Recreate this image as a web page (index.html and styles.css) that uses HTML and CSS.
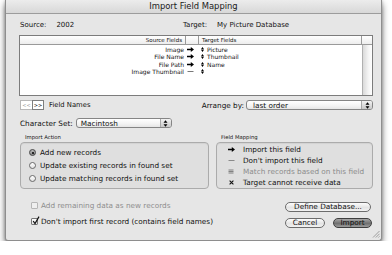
FILE: index.html
```html
<!DOCTYPE html>
<html lang="en">
<head>
  <meta charset="UTF-8" />
  <title>Import Field Mapping</title>
  <link rel="stylesheet" href="styles.css">
</head>
<body>
  <div class="window">
    <div class="titlebar">Import Field Mapping</div>
    <div class="content">
      <div class="info-row">
        <div class="info source"><span class="info-label">Source:</span>2002</div>
        <div class="info"><span class="info-label">Target:</span>My Picture Database</div>
      </div>

      <div class="table">
        <div class="thead">
          <div class="th src">Source Fields</div>
          <div class="th mid"></div>
          <div class="th tgt">Target Fields</div>
          <div class="th corner"></div>
        </div>
        <div class="tbody">
          <div class="rows">
            <div class="row">
              <span class="src">Image</span>
              <span class="mid"><svg class="ic" width="7" height="5" viewBox="0 0 7 5"><path d="M0 1.7H3.8V0L7 2.5 3.8 5V3.3H0Z"/></svg></span>
              <span class="tgt"><svg class="handle" width="3" height="5" viewBox="0 0 3 5"><path d="M1.5 0L3 2.2H0ZM0 2.8H3L1.5 5Z"/></svg>Picture</span>
            </div>
            <div class="row">
              <span class="src">File Name</span>
              <span class="mid"><svg class="ic" width="7" height="5" viewBox="0 0 7 5"><path d="M0 1.7H3.8V0L7 2.5 3.8 5V3.3H0Z"/></svg></span>
              <span class="tgt"><svg class="handle" width="3" height="5" viewBox="0 0 3 5"><path d="M1.5 0L3 2.2H0ZM0 2.8H3L1.5 5Z"/></svg>Thumbnail</span>
            </div>
            <div class="row">
              <span class="src">File Path</span>
              <span class="mid"><svg class="ic" width="7" height="5" viewBox="0 0 7 5"><path d="M0 1.7H3.8V0L7 2.5 3.8 5V3.3H0Z"/></svg></span>
              <span class="tgt"><svg class="handle" width="3" height="5" viewBox="0 0 3 5"><path d="M1.5 0L3 2.2H0ZM0 2.8H3L1.5 5Z"/></svg>Name</span>
            </div>
            <div class="row">
              <span class="src">Image Thumbnail</span>
              <span class="mid"><svg class="ic" width="7" height="5" viewBox="0 0 7 5"><path d="M0.5 2.5H6.5" stroke="#555" stroke-width="0.8"/></svg></span>
              <span class="tgt"><svg class="handle" width="3" height="5" viewBox="0 0 3 5"><path d="M1.5 0L3 2.2H0ZM0 2.8H3L1.5 5Z"/></svg></span>
            </div>
          </div>
          <div class="scroll-track"></div>
        </div>
      </div>

      <div class="nav-row">
        <div class="nav-btns">
          <span class="nav-btn disabled">&lt;&lt;</span>
          <span class="nav-btn">&gt;&gt;</span>
        </div>
        <span class="nav-label">Field Names</span>
        <div class="arrange">
          <span class="field-label">Arrange by:</span>
          <div class="popup arrange-popup">
            <span class="popup-text">last order</span>
            <span class="popup-arrows"><svg width="5" height="7" viewBox="0 0 5 7"><path d="M2.5 0.3L4.5 2.8H0.5ZM0.5 4.2H4.5L2.5 6.7Z"/></svg></span>
          </div>
        </div>
      </div>

      <div class="charset-row">
        <span class="field-label">Character Set:</span>
        <div class="popup charset-popup">
          <span class="popup-text">Macintosh</span>
          <span class="popup-arrows"><svg width="5" height="7" viewBox="0 0 5 7"><path d="M2.5 0.3L4.5 2.8H0.5ZM0.5 4.2H4.5L2.5 6.7Z"/></svg></span>
        </div>
      </div>

      <div class="groups">
        <div class="group import-group">
          <div class="group-title">Import Action</div>
          <div class="group-box">
            <div class="radio-row"><span class="radio checked"></span>Add new records</div>
            <div class="radio-row"><span class="radio"></span>Update existing records in found set</div>
            <div class="radio-row"><span class="radio"></span>Update matching records in found set</div>
          </div>
        </div>
        <div class="group mapping-group">
          <div class="group-title">Field Mapping</div>
          <div class="group-box">
            <div class="legend-row">
              <span class="legend-icon"><svg width="7" height="5" viewBox="0 0 7 5"><path d="M0 1.7H3.8V0L7 2.5 3.8 5V3.3H0Z"/></svg></span>
              Import this field
            </div>
            <div class="legend-row">
              <span class="legend-icon"><svg width="7" height="5" viewBox="0 0 7 5"><path d="M0.5 2.5H6.5" stroke="#666" stroke-width="0.7"/></svg></span>
              Don't import this field
            </div>
            <div class="legend-row disabled">
              <span class="legend-icon"><svg width="6" height="5" viewBox="0 0 6 5"><path d="M0.5 1H5.5M0.5 2.5H5.5M0.5 4H5.5" stroke="#777" stroke-width="0.9"/></svg></span>
              Match records based on this field
            </div>
            <div class="legend-row">
              <span class="legend-icon"><svg width="5" height="5" viewBox="0 0 5 5"><path d="M0.6 0.6L4.4 4.4M4.4 0.6L0.6 4.4" stroke="#111" stroke-width="1.1"/></svg></span>
              Target cannot receive data
            </div>
          </div>
        </div>
      </div>

      <div class="bottom">
        <div class="checks">
          <div class="check-row disabled"><span class="checkbox"></span>Add remaining data as new records</div>
          <div class="check-row">
            <span class="checkbox"><svg class="tick" width="8" height="9" viewBox="0 0 8 9"><path d="M1.2 5L3 7.6L7 0.6" fill="none" stroke="#111" stroke-width="1.2"/></svg></span>
            Don't import first record (contains field names)
          </div>
        </div>
        <div class="buttons">
          <button class="btn define">Define Database...</button>
          <div class="btn-row">
            <button class="btn cancel">Cancel</button>
            <button class="btn default">Import</button>
          </div>
        </div>
      </div>
    </div>
    <svg class="grip" width="8" height="8" viewBox="0 0 8 8"><path d="M7.5 1L1 7.5M7.5 3.8L3.8 7.5M7.5 6.4L6.4 7.5" stroke="#8a8a8a" stroke-width="0.8"/></svg>
  </div>
</body>
</html>
```

FILE: styles.css
```css
* {
  box-sizing: border-box;
}

body {
  margin: 0;
  background: #fff;
  font-family: "DejaVu Sans", "Liberation Sans", sans-serif;
  font-size: 7.3px;
  color: #111;
}

.window {
  position: relative;
  margin-left: 5px;
  width: 377px;
  height: 241px;
  background: #e6e6e6;
  border: 1px solid #8e8e8e;
  border-top: none;
  border-radius: 0 0 3px 3px;
  box-shadow: 0 4px 7px rgba(0, 0, 0, 0.55), 0 0 3px rgba(0, 0, 0, 0.25);
}

.titlebar {
  height: 14px;
  line-height: 13px;
  text-align: center;
  font-size: 8.4px;
  color: #1a1a1a;
  background: linear-gradient(#ececec, #d8d8d8);
  border-bottom: 1px solid #9c9c9c;
}

.content {
  padding: 0 8px 0 13px;
}

.info-row {
  display: flex;
  margin-top: 5px;
  height: 12px;
  line-height: 12px;
  padding-left: 1px;
  font-size: 7px;
}

.info.source {
  width: 163px;
}

.info-label {
  margin-right: 10px;
}

/* field table */
.table {
  margin-top: 4px;
  height: 61px;
  border: 1px solid #7c7c7c;
  background: #fff;
  display: flex;
  flex-direction: column;
}

.thead {
  display: grid;
  grid-template-columns: 166px 13px 1fr 10px;
  height: 9px;
  line-height: 8px;
  font-size: 5.5px;
  background: linear-gradient(#fff, #ededed);
  border-bottom: 1px solid #9a9a9a;
}

.th {
  border-right: 1px solid #9a9a9a;
}

.th.src {
  text-align: right;
  padding-right: 3px;
}

.th.tgt {
  padding-left: 3px;
}

.th.corner {
  border-right: none;
}

.tbody {
  flex: 1;
  display: flex;
}

.rows {
  flex: 1;
  padding-top: 0.5px;
}

.row {
  display: grid;
  grid-template-columns: 166px 13px 1fr;
  height: 7.5px;
  line-height: 7.5px;
  font-size: 6px;
}

.row .src {
  text-align: right;
  padding-right: 2px;
}

.row .mid {
  display: flex;
  align-items: center;
  padding-left: 1px;
}

.row .tgt {
  display: flex;
  align-items: center;
  padding-left: 2px;
}

.handle {
  margin-right: 3px;
}

.scroll-track {
  width: 10px;
  border-left: 1px solid #b0b0b0;
  background: linear-gradient(to right, #dadada, #f4f4f4 60%, #fff);
}

/* navigation and popups */
.nav-row {
  display: flex;
  align-items: center;
  margin-top: 4px;
  height: 10px;
}

.nav-btns {
  display: flex;
  margin-left: 1px;
}

.nav-btn {
  width: 12px;
  height: 10px;
  line-height: 9px;
  text-align: center;
  font-size: 5px;
  background: #fff;
  border: 1px solid #7e7e7e;
}

.nav-btn.disabled {
  color: #a0a0a0;
  border-color: #b8b8b8;
  border-right: none;
}

.nav-label {
  margin-left: 5px;
  font-size: 6.8px;
}

.arrange {
  margin-left: auto;
  display: flex;
  align-items: center;
}

.field-label {
  margin-right: 2px;
}

.popup {
  display: flex;
  align-items: center;
  height: 10px;
  border: 1px solid #858585;
  border-radius: 3px;
  background: linear-gradient(#fff, #f3f3f3 60%, #e6e6e6);
}

.popup-text {
  flex: 1;
  padding-left: 6px;
}

.popup-arrows {
  display: flex;
  align-items: center;
  justify-content: center;
  width: 11px;
  height: 100%;
  border-left: 1px solid #a8a8a8;
  border-radius: 0 2px 2px 0;
  background: linear-gradient(#f2f2f2, #c8c8c8);
}

.arrange-popup {
  width: 127px;
}

.charset-row {
  display: flex;
  align-items: center;
  margin-top: 8px;
  height: 10px;
  padding-left: 1px;
}

.charset-popup {
  width: 96px;
  margin-left: 1px;
}

.charset-popup .popup-text {
  padding-left: 4px;
}

/* group boxes */
.groups {
  display: flex;
  gap: 7px;
  margin-top: 5px;
  padding-left: 1px;
}

.import-group {
  width: 189px;
}

.mapping-group {
  width: 157px;
}

.group-title {
  height: 8px;
  line-height: 8px;
  padding-left: 5px;
  font-size: 5.3px;
  margin-bottom: 1px;
}

.group-box {
  height: 47px;
  border: 1px solid #ababab;
  border-radius: 4px;
  background: #dfdfdf;
  box-shadow: inset 0 1px 1px rgba(0, 0, 0, 0.06);
}

.import-group .group-box {
  padding: 3px 0 0 8px;
}

.radio-row {
  display: flex;
  align-items: center;
  height: 13px;
}

.radio {
  position: relative;
  width: 7px;
  height: 7px;
  margin-right: 4px;
  border: 1px solid #6a6a6a;
  border-radius: 50%;
  background: linear-gradient(#fff, #e2e2e2);
}

.radio.checked {
  background: linear-gradient(#b5b5b5, #8d8d8d);
  border-color: #444;
}

.radio.checked::after {
  content: "";
  position: absolute;
  left: 1.5px;
  top: 1.5px;
  width: 2px;
  height: 2px;
  border-radius: 50%;
  background: #000;
}

.mapping-group .group-box {
  padding-top: 0.5px;
}

.legend-row {
  display: flex;
  align-items: center;
  height: 11px;
}

.legend-row.disabled {
  color: #8c8c8c;
}

.legend-icon {
  display: flex;
  align-items: center;
  justify-content: center;
  width: 10px;
  margin-left: 9px;
  margin-right: 7px;
}

/* bottom */
.bottom {
  display: flex;
  justify-content: space-between;
}

.checks {
  margin-top: 10px;
  padding-left: 12px;
}

.check-row {
  display: flex;
  align-items: center;
  height: 12px;
}

.check-row + .check-row {
  margin-top: 4px;
}

.check-row.disabled {
  color: #8e8e8e;
}

.checkbox {
  position: relative;
  width: 7px;
  height: 7px;
  margin-right: 3px;
  border: 1px solid #777;
  border-radius: 1px;
  background: linear-gradient(#fff, #e4e4e4);
}

.check-row.disabled .checkbox {
  border-color: #b6b6b6;
  background: #efefef;
}

.tick {
  position: absolute;
  left: 0;
  top: -3px;
}

.buttons {
  width: 87px;
  margin-top: 13px;
  margin-right: 1px;
}

.btn {
  display: block;
  height: 10px;
  padding: 0;
  font-family: "DejaVu Sans", "Liberation Sans", sans-serif;
  font-size: 7.3px;
  line-height: 8px;
  color: #111;
  border: 1px solid #6c6c6c;
  border-radius: 5px;
  background: linear-gradient(#fdfdfd, #e4e4e4 55%, #f2f2f2);
}

.btn.define {
  width: 86px;
}

.btn-row {
  display: flex;
  justify-content: space-between;
  margin-top: 6px;
}

.btn.cancel {
  width: 40px;
}

.btn.default {
  width: 39px;
  border-color: #3e3e3e;
  background: linear-gradient(#a6a6a6, #707070 55%, #9c9c9c);
}

.grip {
  position: absolute;
  right: 1px;
  bottom: 2px;
}
```
